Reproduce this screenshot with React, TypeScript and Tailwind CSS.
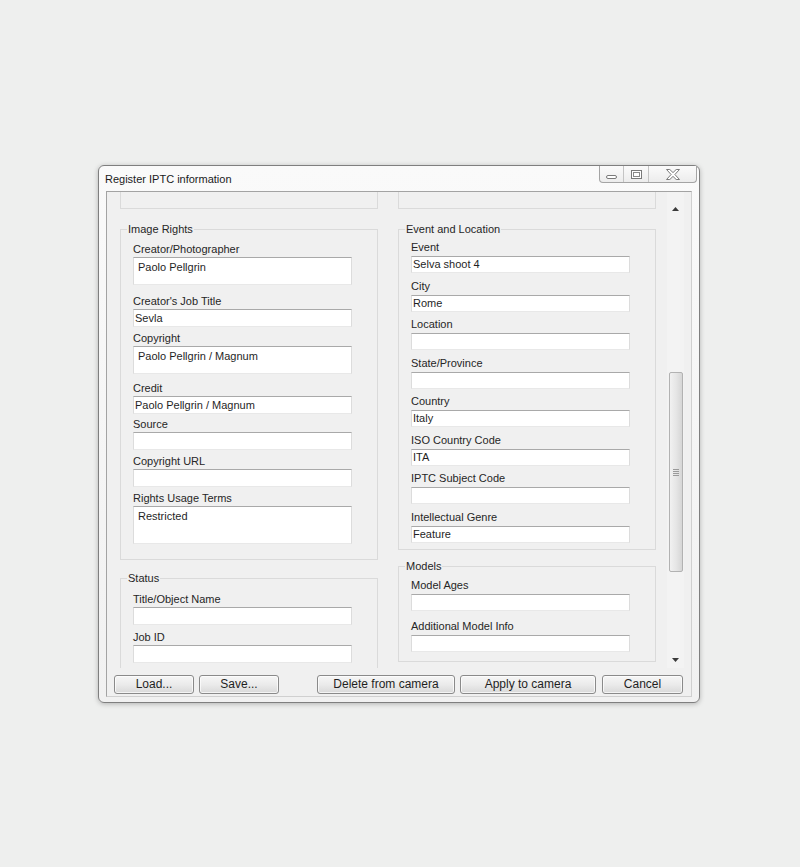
import React from "react";

type FieldProps = {
  label: string;
  value?: string;
  h?: number;
  gap?: number;
  mb?: number;
  multi?: boolean;
};

// heights and spacing taken from the dialog, one entry per row
const Field = ({ label, value = "", h = 18, gap = 1, mb = 0, multi = false }: FieldProps) => {
  return (
    <div style={{ marginBottom: mb }}>
      <div className="h-[14px] leading-[14px] text-[#262626] whitespace-nowrap" style={{ marginBottom: gap }}>
        {label}
      </div>
      <div
        className={
          "w-[219px] bg-white border border-t-[#a9a9a9] border-x-[#dcdcdc] border-b-[#e8e8e8] text-[#1f1f1f] whitespace-nowrap " +
          (multi ? "pl-[4px] pt-[2px] leading-[14px]" : "pl-[1px] flex items-center")
        }
        style={{ height: h }}
      >
        {value}
      </div>
    </div>
  );
};

const Group = ({ title, className, children }: { title: string; className?: string; children: React.ReactNode }) => {
  return (
    <fieldset className={"border border-[#dadada] px-[6px] " + (className ?? "")}>
      <legend className="px-[1px] h-[14px] leading-[14px] text-[#262626]">{title}</legend>
      {children}
    </fieldset>
  );
};

const WinButton = ({ label, className }: { label: string; className: string }) => {
  return (
    <button
      className={
        "h-[19px] rounded-[3px] border border-[#8a8a8a] bg-gradient-to-b from-[#f6f6f6] via-[#ebebeb] to-[#d9d9d9] text-[12px] leading-[17px] text-[#1f1f1f] shadow-[inset_0_0_0_1px_rgba(255,255,255,0.7)] " +
        className
      }
    >
      {label}
    </button>
  );
};

const Arrow = ({ up }: { up: boolean }) => (
  <svg width="7" height="4" viewBox="0 0 7 4">
    {up ? <polygon points="0,4 7,4 3.5,0" fill="#3a3a3a" /> : <polygon points="0,0 7,0 3.5,4" fill="#3a3a3a" />}
  </svg>
);

const App = () => {
  return (
    <div className="min-h-[867px] w-full bg-[#eeefee] pt-[165px] pl-[98px] font-['Liberation_Sans',Arial,sans-serif] text-[11px]">
      <div className="w-[602px] h-[538px] rounded-[6px] border border-[#7f7f7f] bg-gradient-to-b from-[#fafafa] to-[#f1f1f1] shadow-[0_1px_5px_rgba(0,0,0,0.25)] flex flex-col">
        {/* title bar */}
        <div className="h-[25px] flex items-start justify-between shrink-0">
          <div className="pl-[6px] pt-[6px] text-[11px] leading-[14px] text-[#1a1a1a]">Register IPTC information</div>
          <div className="mr-[2px] h-[17px] flex border border-t-0 border-[#a4a4a4] rounded-b-[4px] bg-gradient-to-b from-[#fbfbfb] to-[#ececec] overflow-hidden">
            <div className="w-[24px] flex items-end justify-center pb-[3px] border-r border-[#c4c4c4]">
              <svg width="11" height="4" viewBox="0 0 11 4">
                <rect x="0.5" y="0.5" width="10" height="3" rx="1.5" fill="#fff" stroke="#7a7a7a" />
              </svg>
            </div>
            <div className="w-[25px] flex items-center justify-center border-r border-[#c4c4c4]">
              <svg width="11" height="9" viewBox="0 0 11 9">
                <rect x="0.5" y="0.5" width="10" height="8" fill="#fff" stroke="#7a7a7a" />
                <rect x="2.5" y="2.5" width="6" height="4" fill="none" stroke="#8a8a8a" />
              </svg>
            </div>
            <div className="w-[47px] flex items-center justify-center">
              <svg width="14" height="11" viewBox="0 0 14 11">
                <polygon
                  points="0.5,0.5 3.8,0.5 7,3.6 10.2,0.5 13.5,0.5 8.9,5.5 13.5,10.5 10.2,10.5 7,7.4 3.8,10.5 0.5,10.5 5.1,5.5"
                  fill="#fff"
                  stroke="#7a7a7a"
                />
              </svg>
            </div>
          </div>
        </div>

        {/* client area */}
        <div className="mx-[7px] h-[506px] border border-[#a3a3a3] border-r-[#d0d0d0] border-b-[#d0d0d0] bg-[#f0f0f0] flex flex-col">
          <div className="h-[476px] flex overflow-hidden shrink-0">
            <div className="w-[560px] pl-[13px] flex gap-[20px] overflow-hidden">
              {/* left column */}
              <div className="w-[258px] shrink-0">
                <div className="h-[17px] border border-t-0 border-[#dadada]" />
                <Group title="Image Rights" className="mt-[13px]">
                  <div className="pl-[6px] pt-[6px] pb-[15px]">
                    <Field label="Creator/Photographer" value="Paolo Pellgrin" h={28} mb={9} multi />
                    <Field label="Creator's Job Title" value="Sevla" mb={4} />
                    <Field label="Copyright" value="Paolo Pellgrin / Magnum" h={28} mb={7} multi />
                    <Field label="Credit" value="Paolo Pellgrin / Magnum" mb={3} />
                    <Field label="Source" mb={4} />
                    <Field label="Copyright URL" mb={4} />
                    <Field label="Rights Usage Terms" value="Restricted" h={38} multi />
                  </div>
                </Group>
                <Group title="Status" className="mt-[11px]">
                  <div className="pl-[6px] pt-[7px] pb-[10px]">
                    <Field label="Title/Object Name" mb={5} />
                    <Field label="Job ID" />
                  </div>
                </Group>
              </div>

              {/* right column */}
              <div className="w-[258px] shrink-0">
                <div className="h-[17px] border border-t-0 border-[#dadada]" />
                <Group title="Event and Location" className="mt-[13px]">
                  <div className="pl-[6px] pt-[4px] pb-[6px]">
                    <Field label="Event" value="Selva shoot 4" h={17} gap={2} mb={6} />
                    <Field label="City" value="Rome" h={17} gap={2} mb={5} />
                    <Field label="Location" h={17} gap={2} mb={6} />
                    <Field label="State/Province" h={17} gap={2} mb={5} />
                    <Field label="Country" value="Italy" h={17} gap={2} mb={6} />
                    <Field label="ISO Country Code" value="ITA" h={17} gap={2} mb={5} />
                    <Field label="IPTC Subject Code" h={17} gap={2} mb={6} />
                    <Field label="Intellectual Genre" value="Feature" h={17} gap={2} />
                  </div>
                </Group>
                <Group title="Models" className="mt-[9px]">
                  <div className="pl-[6px] pt-[5px] pb-[9px]">
                    <Field label="Model Ages" h={17} gap={2} mb={8} />
                    <Field label="Additional Model Info" h={17} gap={2} />
                  </div>
                </Group>
              </div>
            </div>

            {/* scrollbar */}
            <div className="w-[17px] flex flex-col items-center bg-[#f3f3f3]">
              <div className="h-[8px] w-full" />
              <div className="h-[17px] w-full flex items-center justify-center">
                <Arrow up />
              </div>
              <div className="h-[155px] w-full" />
              <div className="h-[200px] w-[14px] rounded-[2px] border border-[#b2b2b2] bg-gradient-to-r from-[#f1f1f1] via-[#e6e6e6] to-[#d6d6d6] flex items-center justify-center">
                <div className="flex flex-col gap-[1px]">
                  <div className="w-[6px] h-[1px] bg-[#9a9a9a]" />
                  <div className="w-[6px] h-[1px] bg-[#9a9a9a]" />
                  <div className="w-[6px] h-[1px] bg-[#9a9a9a]" />
                  <div className="w-[6px] h-[1px] bg-[#9a9a9a]" />
                </div>
              </div>
              <div className="flex-1 w-full" />
              <div className="h-[17px] w-full flex items-center justify-center">
                <Arrow up={false} />
              </div>
            </div>
          </div>

          {/* button row */}
          <div className="mt-[7px] pl-[7px] flex">
            <WinButton label="Load..." className="w-[80px]" />
            <WinButton label="Save..." className="w-[80px] ml-[5px]" />
            <WinButton label="Delete from camera" className="w-[138px] ml-[38px]" />
            <WinButton label="Apply to camera" className="w-[136px] ml-[5px]" />
            <WinButton label="Cancel" className="w-[81px] ml-[6px]" />
          </div>
        </div>
      </div>
    </div>
  );
};

export default App;
